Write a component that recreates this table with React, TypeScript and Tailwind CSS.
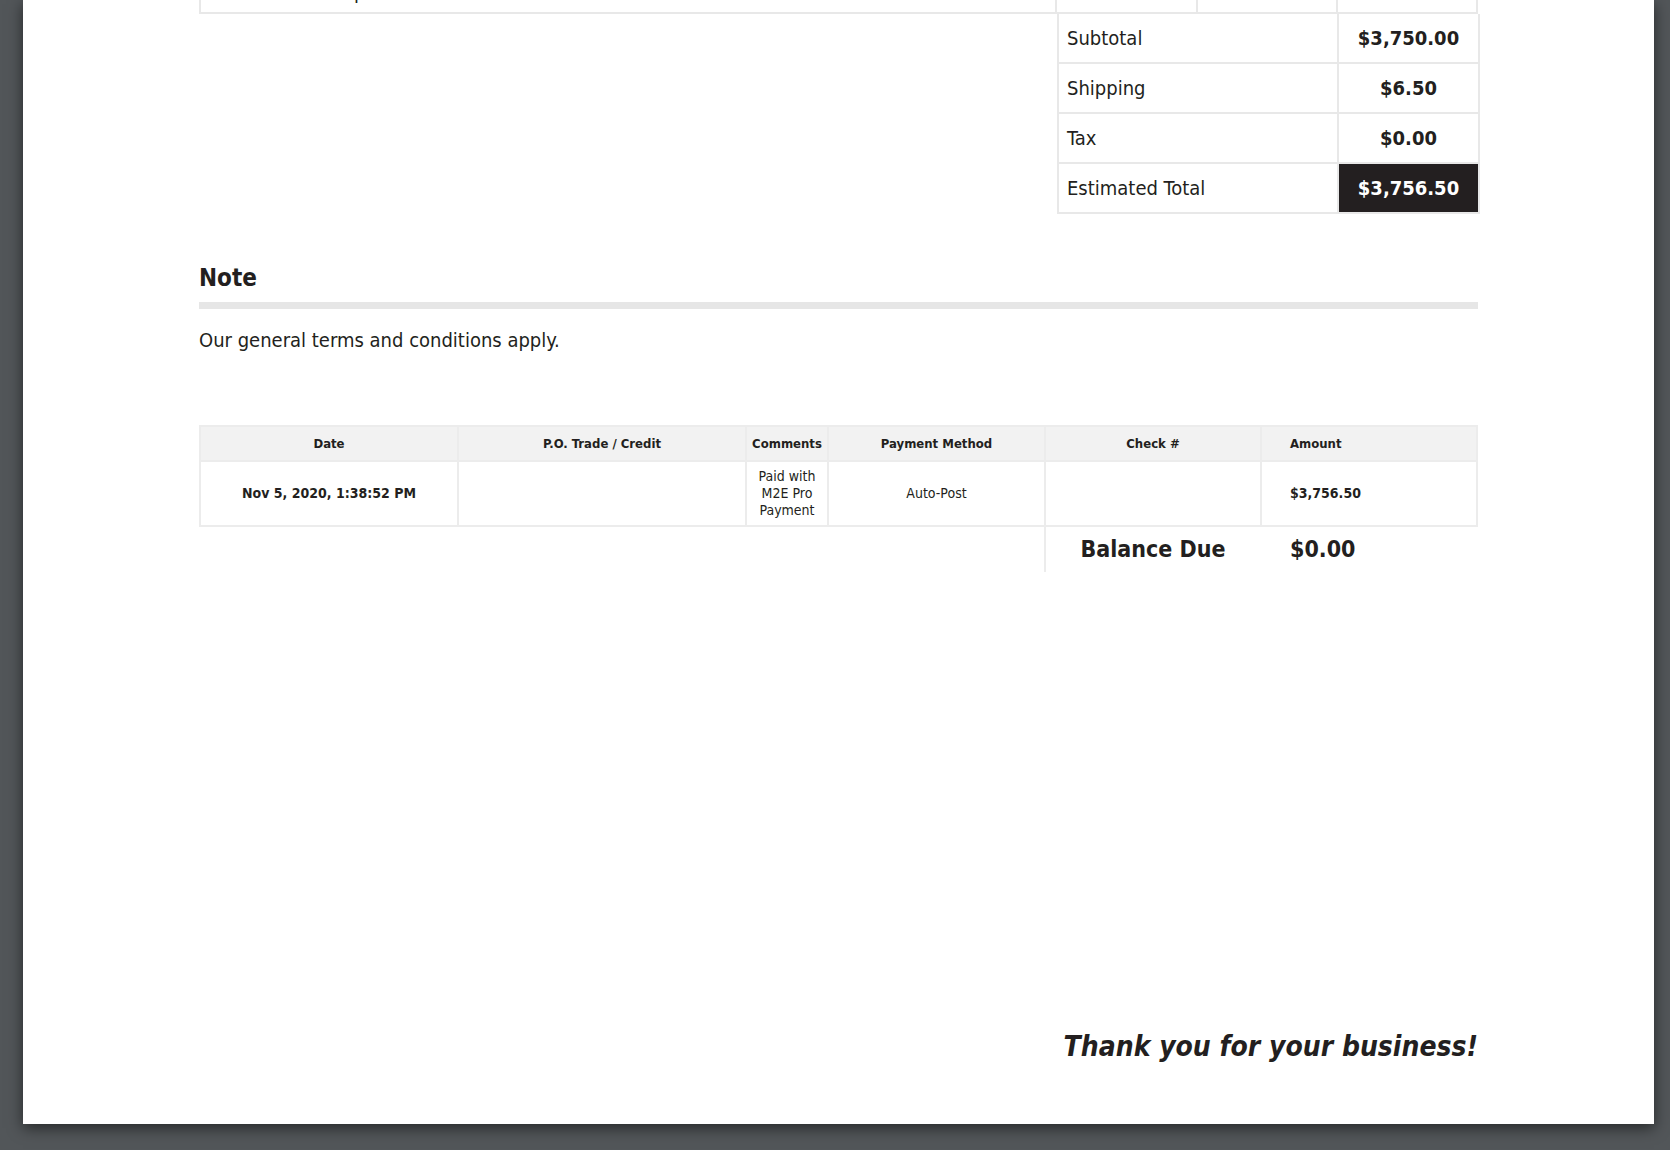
const FONT = "[font-family:'DejaVu_Sans_Condensed','DejaVu_Sans',sans-serif] font-stretch-condensed";

const TOTALS = [
  { label: "Subtotal", value: "$3,750.00" },
  { label: "Shipping", value: "$6.50" },
  { label: "Tax", value: "$0.00" },
];

const PAY_COLS = [
  { key: "date", label: "Date" },
  { key: "po", label: "P.O. Trade / Credit" },
  { key: "comments", label: "Comments" },
  { key: "method", label: "Payment Method" },
  { key: "check", label: "Check #" },
  { key: "amount", label: "Amount" },
];

export default function App() {
  return (
    <div className={`h-[1150px] overflow-hidden bg-[#525659] text-[#231f20] ${FONT}`}>
      <div className="ml-[23px] flex h-[1124px] w-[1631px] flex-col bg-white px-[176px] shadow-[0_4px_14px_rgba(0,0,0,0.55)]">
        {/* tail of the line items table */}
        <div className="flex h-[14px] overflow-hidden border-x-2 border-b-2 border-[#e8e8e8]">
          <div className="flex w-[856px] flex-col justify-end border-r-2 border-[#e8e8e8]">
            <div className="mb-[8px] pl-[112px] text-[20px] leading-[24px]">Setup</div>
          </div>
          <div className="w-[141px] border-r-2 border-[#e8e8e8]" />
          <div className="w-[140px] border-r-2 border-[#e8e8e8]" />
          <div className="flex-1" />
        </div>

        {/* totals */}
        <div className="-mt-[2px] self-end">
          <div className="grid w-[421px] grid-cols-[280px_141px] border-l-2 border-t-2 border-[#e8e8e8]">
            {TOTALS.map((t) => (
              <div key={t.label} className="contents">
                <div className="flex h-[50px] items-center border-b-2 border-r-2 border-[#e8e8e8] pl-[8px] text-[20px]">
                  {t.label}
                </div>
                <div className="flex h-[50px] items-center justify-center border-b-2 border-r-2 border-[#e8e8e8] text-[20px] font-bold">
                  {t.value}
                </div>
              </div>
            ))}
            <div className="flex h-[50px] items-center border-b-2 border-r-2 border-[#e8e8e8] pl-[8px] text-[20px]">
              Estimated Total
            </div>
            <div className="flex h-[50px] items-center justify-center border-b-2 border-r-2 border-[#e8e8e8] bg-[#231f20] text-[20px] font-bold text-white">
              $3,756.50
            </div>
          </div>
        </div>

        {/* note */}
        <h2 className="mt-[50px] text-[24px] font-bold leading-[28px]">Note</h2>
        <div className="mt-[10px] h-[7px] bg-[#e6e6e6]" />
        <p className="mt-[17px] text-[20px] leading-[28px]">Our general terms and conditions apply.</p>

        {/* payments */}
        <div className="mt-[71px]">
          <div className="grid grid-cols-[258px_288px_82px_217px_216px_216px] border-l-2 border-t-2 border-[#ececec]">
            {PAY_COLS.map((c) => (
              <div
                key={c.key}
                className={`flex h-[35px] items-center border-b-2 border-r-2 border-[#ececec] bg-[#f2f2f2] text-[13px] font-bold ${
                  c.key === "amount" ? "justify-start pl-[28px]" : "justify-center"
                }`}
              >
                {c.label}
              </div>
            ))}
            <div className="flex h-[65px] items-center justify-center border-b-2 border-r-2 border-[#ececec] text-[14px] font-bold">
              Nov 5, 2020, 1:38:52 PM
            </div>
            <div className="border-b-2 border-r-2 border-[#ececec]" />
            <div className="flex h-[65px] items-center justify-center border-b-2 border-r-2 border-[#ececec] text-center text-[14px] leading-[17px]">
              Paid with
              <br />
              M2E Pro
              <br />
              Payment
            </div>
            <div className="flex h-[65px] items-center justify-center border-b-2 border-r-2 border-[#ececec] text-[14px]">
              Auto-Post
            </div>
            <div className="border-b-2 border-r-2 border-[#ececec]" />
            <div className="flex h-[65px] items-center border-b-2 border-r-2 border-[#ececec] pl-[28px] text-[14px] font-bold">
              $3,756.50
            </div>
          </div>
          <div className="grid grid-cols-[845px_216px_216px]">
            <div />
            <div className="flex h-[45px] items-center justify-center border-l-2 border-[#ececec] text-[23px] font-bold">
              Balance Due
            </div>
            <div className="flex h-[45px] items-center pl-[30px] text-[23px] font-bold">$0.00</div>
          </div>
        </div>

        <div className="mt-auto mb-[60px] text-right text-[28px] font-bold italic leading-[34px]">
          Thank you for your business!
        </div>
      </div>
    </div>
  );
}
